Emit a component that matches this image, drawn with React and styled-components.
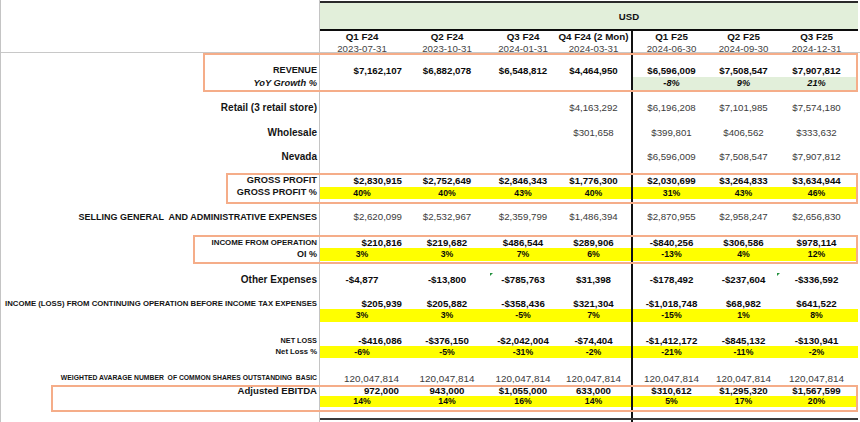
import React from 'react';
import styled, { createGlobalStyle } from 'styled-components';

const GlobalStyle = createGlobalStyle`
  * { box-sizing: border-box; }
  html, body { margin: 0; padding: 0; background: #fff; }
  body { font-family: "Liberation Sans", Arial, sans-serif; }
`;

// label | Q1..Q4 F24 | divider | Q1..Q3 F25 | tail
const COLS = '319px 84px 86px 66px 75px 2px 77px 67px 79px 2px';

const Sheet = styled.div`
  width: 860px;
  height: 422px;
  overflow: hidden;
  border-left: 1px solid #c4c4c4;
`;

const Row = styled.div`
  display: grid;
  grid-template-columns: ${COLS};
  height: ${(p) => p.$h}px;
`;

const HeadRow = styled(Row)`
  border-bottom: 1px solid #c8c8c8;
`;

const Label = styled.div`
  border-right: 1px solid #c4c4c4;
  display: flex;
  align-items: center;
  justify-content: flex-end;
  padding-right: 2px;
  font-size: ${(p) => p.$size}px;
  font-weight: 700;
  font-style: ${(p) => (p.$italic ? 'italic' : 'normal')};
  white-space: pre;
  color: #141414;
  line-height: 1;
`;

const Band = styled.div`
  grid-column: 2 / -1;
  margin-top: 1px;
  background: #e2efda;
  border-top: 2px solid #2a2a2a;
  border-bottom: 2px solid #0c0c0c;
  display: flex;
  align-items: center;
  justify-content: center;
  padding-left: 80px;
  font-size: 9.6px;
  font-weight: 700;
  color: #111;
`;

const HeadCell = styled.div`
  display: flex;
  flex-direction: column;
  align-items: center;
  justify-content: center;
  line-height: 12px;
  white-space: nowrap;
`;

const Quarter = styled.span`
  font-size: 9.8px;
  font-weight: 700;
  color: #111;
`;

const Period = styled.span`
  font-size: 9.7px;
  color: #444;
`;

const Cell = styled.div`
  position: relative;
  display: flex;
  align-items: center;
  justify-content: ${(p) => (p.$align === 'right' ? 'flex-end' : 'center')};
  padding-right: ${(p) => p.$pad}px;
  background: ${(p) => p.$fill || 'transparent'};
  font-size: ${(p) => p.$size}px;
  font-weight: ${(p) => (p.$bold ? 700 : 400)};
  font-style: ${(p) => (p.$italic ? 'italic' : 'normal')};
  color: ${(p) => (p.$bold ? '#0a0a0a' : '#3c3c3c')};
  white-space: nowrap;
  line-height: 1;
`;

const Divider = styled.div`
  background: #111;
`;

const Tail = styled.div`
  background: ${(p) => p.$fill || 'transparent'};
`;

const ErrorMark = styled.span`
  position: absolute;
  left: 0;
  top: -1px;
  width: 0;
  height: 0;
  border-top: 3px solid #23913f;
  border-right: 3px solid transparent;
`;

const Boxed = styled.div`
  position: relative;
  &::after {
    content: '';
    position: absolute;
    top: 0;
    bottom: 0;
    left: ${(p) => p.$left}px;
    right: 2px;
    border: 2px solid #f5ad89;
    pointer-events: none;
  }
`;

const BottomRule = styled.div`
  grid-column: 2 / -1;
  background: #3a3a3a;
`;

const YELLOW = '#ffff00';
const GREEN = '#e2efda';

const quarters = [
  ['Q1 F24', '2023-07-31'],
  ['Q2 F24', '2023-10-31'],
  ['Q3 F24', '2024-01-31'],
  ['Q4 F24 (2 Mon)', '2024-03-31'],
  ['Q1 F25', '2024-06-30'],
  ['Q2 F25', '2024-09-30'],
  ['Q3 F25', '2024-12-31'],
];

function DataRow({
  h,
  label = '',
  labelSize = 10,
  italic,
  bold,
  size = 9.7,
  fill,
  first = 'center',
  firstPad = 0,
  values = [],
  flags = [],
}) {
  const cell = (i) => {
    const v = values[i];
    return (
      <Cell
        key={i}
        $bold={bold}
        $italic={italic}
        $size={size}
        $fill={v != null && fill ? fill : null}
        $align={i === 0 ? first : 'center'}
        $pad={i === 0 ? firstPad : 0}
      >
        {flags.includes(i) && <ErrorMark />}
        {v}
      </Cell>
    );
  };
  return (
    <Row $h={h}>
      <Label $size={labelSize} $italic={italic}>
        {label}
      </Label>
      {[0, 1, 2, 3].map(cell)}
      <Divider />
      {[4, 5, 6].map(cell)}
      <Tail $fill={fill} />
    </Row>
  );
}

const Spacer = ({ h }) => <DataRow h={h} />;

export default function App() {
  return (
    <>
      <GlobalStyle />
      <Sheet>
        <Row $h={31}>
          <Label $size={10} />
          <Band>USD</Band>
        </Row>
        <HeadRow $h={22}>
          <Label $size={10} />
          {quarters.slice(0, 4).map(([q, d]) => (
            <HeadCell key={q}>
              <Quarter>{q}</Quarter>
              <Period>{d}</Period>
            </HeadCell>
          ))}
          <Divider />
          {quarters.slice(4).map(([q, d]) => (
            <HeadCell key={q}>
              <Quarter>{q}</Quarter>
              <Period>{d}</Period>
            </HeadCell>
          ))}
          <Tail />
        </HeadRow>

        <Boxed $left={202}>
          <Spacer h={11} />
          <DataRow
            h={13}
            label="REVENUE"
            labelSize={9.1}
            bold
            first="right"
            firstPad={2}
            values={['$7,162,107', '$6,882,078', '$6,548,812', '$4,464,950', '$6,596,009', '$7,508,547', '$7,907,812']}
          />
          <DataRow
            h={13}
            label="YoY Growth %"
            labelSize={9.3}
            bold
            italic
            size={9.2}
            fill={GREEN}
            values={[null, null, null, null, '-8%', '9%', '21%']}
          />
          <Spacer h={2} />
        </Boxed>

        <Spacer h={9} />
        <DataRow
          h={13}
          label="Retail (3 retail store)"
          values={[null, null, null, '$4,163,292', '$6,196,208', '$7,101,985', '$7,574,180']}
        />
        <Spacer h={12} />
        <DataRow
          h={13}
          label="Wholesale"
          values={[null, null, null, '$301,658', '$399,801', '$406,562', '$333,632']}
        />
        <Spacer h={11} />
        <DataRow
          h={13}
          label="Nevada"
          values={[null, null, null, null, '$6,596,009', '$7,508,547', '$7,907,812']}
        />
        <Spacer h={10} />

        <Boxed $left={225}>
          <Spacer h={2} />
          <DataRow
            h={12}
            label="GROSS PROFIT"
            labelSize={9.3}
            bold
            first="right"
            firstPad={2}
            values={['$2,830,915', '$2,752,649', '$2,846,343', '$1,776,300', '$2,030,699', '$3,264,833', '$3,634,944']}
          />
          <DataRow
            h={12}
            label="GROSS PROFIT %"
            labelSize={9.2}
            bold
            size={8.7}
            fill={YELLOW}
            values={['40%', '40%', '43%', '40%', '31%', '43%', '46%']}
          />
          <Spacer h={5} />
        </Boxed>

        <Spacer h={7} />
        <DataRow
          h={12}
          label="SELLING GENERAL  AND ADMINISTRATIVE EXPENSES"
          labelSize={9}
          first="right"
          firstPad={2}
          values={['$2,620,099', '$2,532,967', '$2,359,799', '$1,486,394', '$2,870,955', '$2,958,247', '$2,656,830']}
        />
        <Spacer h={12} />

        <Boxed $left={192}>
          <Spacer h={2} />
          <DataRow
            h={11}
            label="INCOME FROM OPERATION"
            labelSize={7.9}
            bold
            first="right"
            firstPad={2}
            values={['$210,816', '$219,682', '$486,544', '$289,906', '-$840,256', '$306,586', '$978,114']}
          />
          <DataRow
            h={13}
            label="OI %"
            labelSize={9}
            bold
            size={8.7}
            fill={YELLOW}
            values={['3%', '3%', '7%', '6%', '-13%', '4%', '12%']}
          />
          <Spacer h={3} />
        </Boxed>

        <Spacer h={10} />
        <DataRow
          h={12}
          label="Other Expenses"
          bold
          flags={[2, 6]}
          values={['-$4,877', '-$13,800', '-$785,763', '$31,398', '-$178,492', '-$237,604', '-$336,592']}
        />
        <Spacer h={12} />
        <DataRow
          h={11}
          label="INCOME (LOSS) FROM CONTINUING OPERATION BEFORE INCOME TAX EXPENSES"
          labelSize={7.75}
          bold
          first="right"
          firstPad={2}
          values={['$205,939', '$205,882', '-$358,436', '$321,304', '-$1,018,748', '$68,982', '$641,522']}
        />
        <DataRow
          h={13}
          bold
          size={8.7}
          fill={YELLOW}
          values={['3%', '3%', '-5%', '7%', '-15%', '1%', '8%']}
        />
        <Spacer h={14} />
        <DataRow
          h={10}
          label="NET LOSS"
          labelSize={7.3}
          bold
          first="right"
          firstPad={2}
          values={['-$416,086', '-$376,150', '-$2,042,004', '-$74,404', '-$1,412,172', '-$845,132', '-$130,941']}
        />
        <DataRow
          h={12}
          label="Net Loss %"
          labelSize={7.7}
          bold
          size={8.7}
          fill={YELLOW}
          values={['-6%', '-5%', '-31%', '-2%', '-21%', '-11%', '-2%']}
        />
        <Spacer h={14} />
        <DataRow
          h={13}
          label="WEIGHTED AVARAGE NUMBER  OF COMMON SHARES OUTSTANDING  BASIC"
          labelSize={6.8}
          size={9.9}
          first="right"
          firstPad={5}
          values={Array(7).fill('120,047,814')}
        />

        <Boxed $left={50}>
          <DataRow
            h={11}
            label="Adjusted EBITDA"
            labelSize={9.6}
            bold
            first="right"
            firstPad={5}
            values={['972,000', '943,000', '$1,055,000', '633,000', '$310,612', '$1,295,320', '$1,567,599']}
          />
          <DataRow
            h={11}
            bold
            size={8.7}
            fill={YELLOW}
            values={['14%', '14%', '16%', '14%', '5%', '17%', '20%']}
          />
          <Spacer h={5} />
        </Boxed>

        <Spacer h={6} />
        <Row $h={2}>
          <Label $size={10} />
          <BottomRule />
        </Row>
        <Spacer h={6} />
      </Sheet>
    </>
  );
}
